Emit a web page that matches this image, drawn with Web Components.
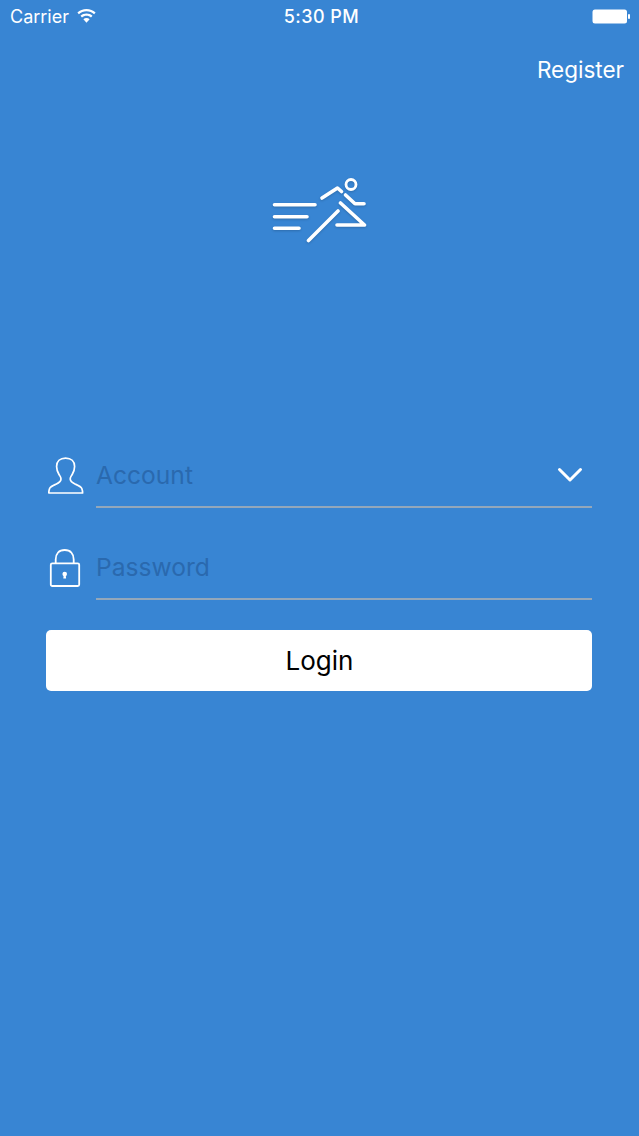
<!DOCTYPE html>
<html>
<head>
<meta charset="utf-8">
<title>Login</title>
<style>
  html, body { margin: 0; padding: 0; height: 100%; background: #3885d3; }
</style>
</head>
<body>
<login-screen>
  <status-bar slot="status"></status-bar>
  <top-nav slot="nav">Register</top-nav>
  <app-logo slot="logo"></app-logo>
  <login-field slot="form" placeholder="Account" icon="user" dropdown></login-field>
  <login-field slot="form" placeholder="Password" icon="lock"></login-field>
  <login-button slot="form">Login</login-button>
</login-screen>

<script>
"use strict";

(() => {
  const ICONS = {
    user: `<svg width="36" height="38" viewBox="0 0 36 38" fill="none" stroke="#fff" stroke-width="1.700" stroke-linejoin="round" stroke-linecap="round">
      <path d="M17.600 1.200C12 1.200 8.600 4.500 8.600 9.500 8.600 13 9.800 15.500 11 17.500 12 19.200 13 20 13 22 13 24.500 11 25.800 8 27.200 5 28.500 2.500 29.500 1.600 31.500 1 33 .8 34.500.8 36H34.600C34.600 34.500 34.400 33 33.800 31.500 32.900 29.500 30.400 28.500 27.400 27.200 24.400 25.800 22.200 24.500 22.200 22 22.200 20 23.200 19.200 24.200 17.500 25.400 15.500 26.600 13 26.600 9.500 26.600 4.500 23.200 1.200 17.600 1.200z"/>
    </svg>`,
    lock: `<svg width="36" height="38" viewBox="0 0 36 38" fill="none" stroke="#fff" stroke-width="1.800">
      <path d="M7.700 14.300V10.500C7.700 4.500 11 1 16.700 1S25.700 4.500 25.700 10.500V14.300"/>
      <rect x="2.800" y="14.300" width="28.400" height="22.700" rx="1.500"/>
      <circle cx="16.700" cy="25" r="2.300" fill="#fff" stroke="none"/>
      <path d="M15.700 26h2l.4 3.600h-2.800z" fill="#fff" stroke="none"/>
    </svg>`
  };

  customElements.define("login-screen", class extends HTMLElement {
    constructor() {
      super();
      this.attachShadow({mode: "open"}).innerHTML = `
      <style>
        :host {
          display: flex;
          flex-direction: column;
          box-sizing: border-box;
          height: 1136px;
          background: #3885d3;
          color: #fff;
          font-family: Inter, "Liberation Sans", sans-serif;
        }
        .logo { display: flex; justify-content: center; margin-top: 82px; }
        .form { display: flex; flex-direction: column; margin-top: 166px; padding: 0 47px 0 46px; }
      </style>
      <slot name="status"></slot>
      <slot name="nav"></slot>
      <div class="logo"><slot name="logo"></slot></div>
      <div class="form"><slot name="form"></slot></div>
      `;
    }
  });

  customElements.define("status-bar", class extends HTMLElement {
    constructor() {
      super();
      this.attachShadow({mode: "open"}).innerHTML = `
      <style>
        :host {
          display: grid;
          grid-template-columns: 1fr auto 1fr;
          align-items: center;
          height: 32px;
          padding: 0 8px 0 10px;
          font-size: 18px;
          color: #fff;
        }
        .left { display: flex; align-items: center; gap: 8px; }
        .time { margin-left: 2px; font-weight: 500; letter-spacing: .45px; }
        .right { display: flex; justify-content: flex-end; }
        svg { display: block; }
      </style>
      <div class="left">
        <span>Carrier</span>
        <svg width="19" height="14" viewBox="0 0 19 14" fill="#fff">
          <path d="M9.500 0C6 0 2.800 1.300.4 3.500l1.500 1.700C3.900 3.400 6.600 2.300 9.500 2.300s5.600 1.100 7.600 2.900l1.500-1.700C16.200 1.300 13 0 9.500 0z"/>
          <path d="M9.500 4.500c-2.300 0-4.400.9-6 2.300l1.500 1.700c1.200-1.100 2.800-1.700 4.500-1.700s3.300.6 4.500 1.700l1.500-1.700c-1.600-1.400-3.700-2.300-6-2.300z"/>
          <path d="M9.500 9c-1.200 0-2.300.4-3.100 1.200l3.100 3.500 3.100-3.500C11.800 9.400 10.700 9 9.500 9z"/>
        </svg>
      </div>
      <span class="time">5:30 PM</span>
      <div class="right">
        <svg width="39" height="15" viewBox="0 0 39 15">
          <rect x=".5" y="0.500" width="34.500" height="14" rx="2.500" fill="#fff"/>
          <rect x="36" y="5" width="2" height="5" rx="1" fill="#fff"/>
        </svg>
      </div>
      `;
    }
  });

  customElements.define("top-nav", class extends HTMLElement {
    constructor() {
      super();
      this.attachShadow({mode: "open"}).innerHTML = `
      <style>
        :host {
          display: flex;
          justify-content: flex-end;
          align-items: center;
          height: 38px;
          margin-top: 18px;
          padding-right: 15px;
          font-size: 22.500px;
          color: #fff;
        }
      </style>
      <slot></slot>
      `;
    }
  });

  customElements.define("app-logo", class extends HTMLElement {
    constructor() {
      super();
      this.attachShadow({mode: "open"}).innerHTML = `
      <style>
        :host { display: block; width: 120px; height: 80px; }
        svg { display: block; overflow: visible; filter: drop-shadow(0 1px 1px rgba(0, 0, 0, .18)); }
      </style>
      <svg width="120" height="80" viewBox="0 0 120 80" fill="none" stroke="#fff" stroke-width="3.600" stroke-linecap="round" stroke-linejoin="round">
        <path d="M14.500 34.700H55M14.500 46.700H47M14.500 58.200H39"/>
        <path d="M62 28 77.500 18 81.500 21.500"/>
        <circle cx="91" cy="14.500" r="5" stroke-width="2.800"/>
        <path d="M85.500 25 95 33.800H104"/>
        <path d="M80.500 33 104.500 55H77"/>
        <path d="M78 41 48.500 70.500"/>
      </svg>
      `;
    }
  });

  customElements.define("login-field", class extends HTMLElement {
    constructor() {
      super();
      const placeholder = this.getAttribute("placeholder") || "";
      const icon = ICONS[this.getAttribute("icon")] || "";
      const chevron = this.hasAttribute("dropdown") ? `
        <svg class="chevron" width="26" height="16" viewBox="0 0 26 16" fill="none" stroke="#fff" stroke-width="3" stroke-linecap="round" stroke-linejoin="round">
          <path d="M2.500 2.500 13 13 23.500 2.500"/>
        </svg>` : "";
      this.attachShadow({mode: "open"}).innerHTML = `
      <style>
        :host {
          display: grid;
          grid-template-columns: 50px 1fr;
          height: 92px;
        }
        .icon { display: flex; align-items: flex-end; padding: 0 0 13px 2px; }
        .icon svg { display: block; }
        .input {
          display: flex;
          justify-content: space-between;
          align-items: center;
          box-sizing: border-box;
          height: 100%;
          padding: 27px 9px 0 0;
          border-bottom: 2px solid #93a7ba;
          font-size: 24.600px;
          color: #2a69ae;
        }
        .chevron { margin-top: 1px; }
      </style>
      <div class="icon">${icon}</div>
      <div class="input"><span>${placeholder}</span>${chevron}</div>
      `;
    }
  });

  customElements.define("login-button", class extends HTMLElement {
    constructor() {
      super();
      this.attachShadow({mode: "open"}).innerHTML = `
      <style>
        :host {
          display: flex;
          justify-content: center;
          align-items: center;
          height: 61px;
          margin-top: 30px;
          padding-left: 1px;
          background: #fff;
          border-radius: 5px;
          color: #000;
          font-size: 26px;
          cursor: pointer;
        }
      </style>
      <slot></slot>
      `;
    }
  });
})();
</script>
</body>
</html>
